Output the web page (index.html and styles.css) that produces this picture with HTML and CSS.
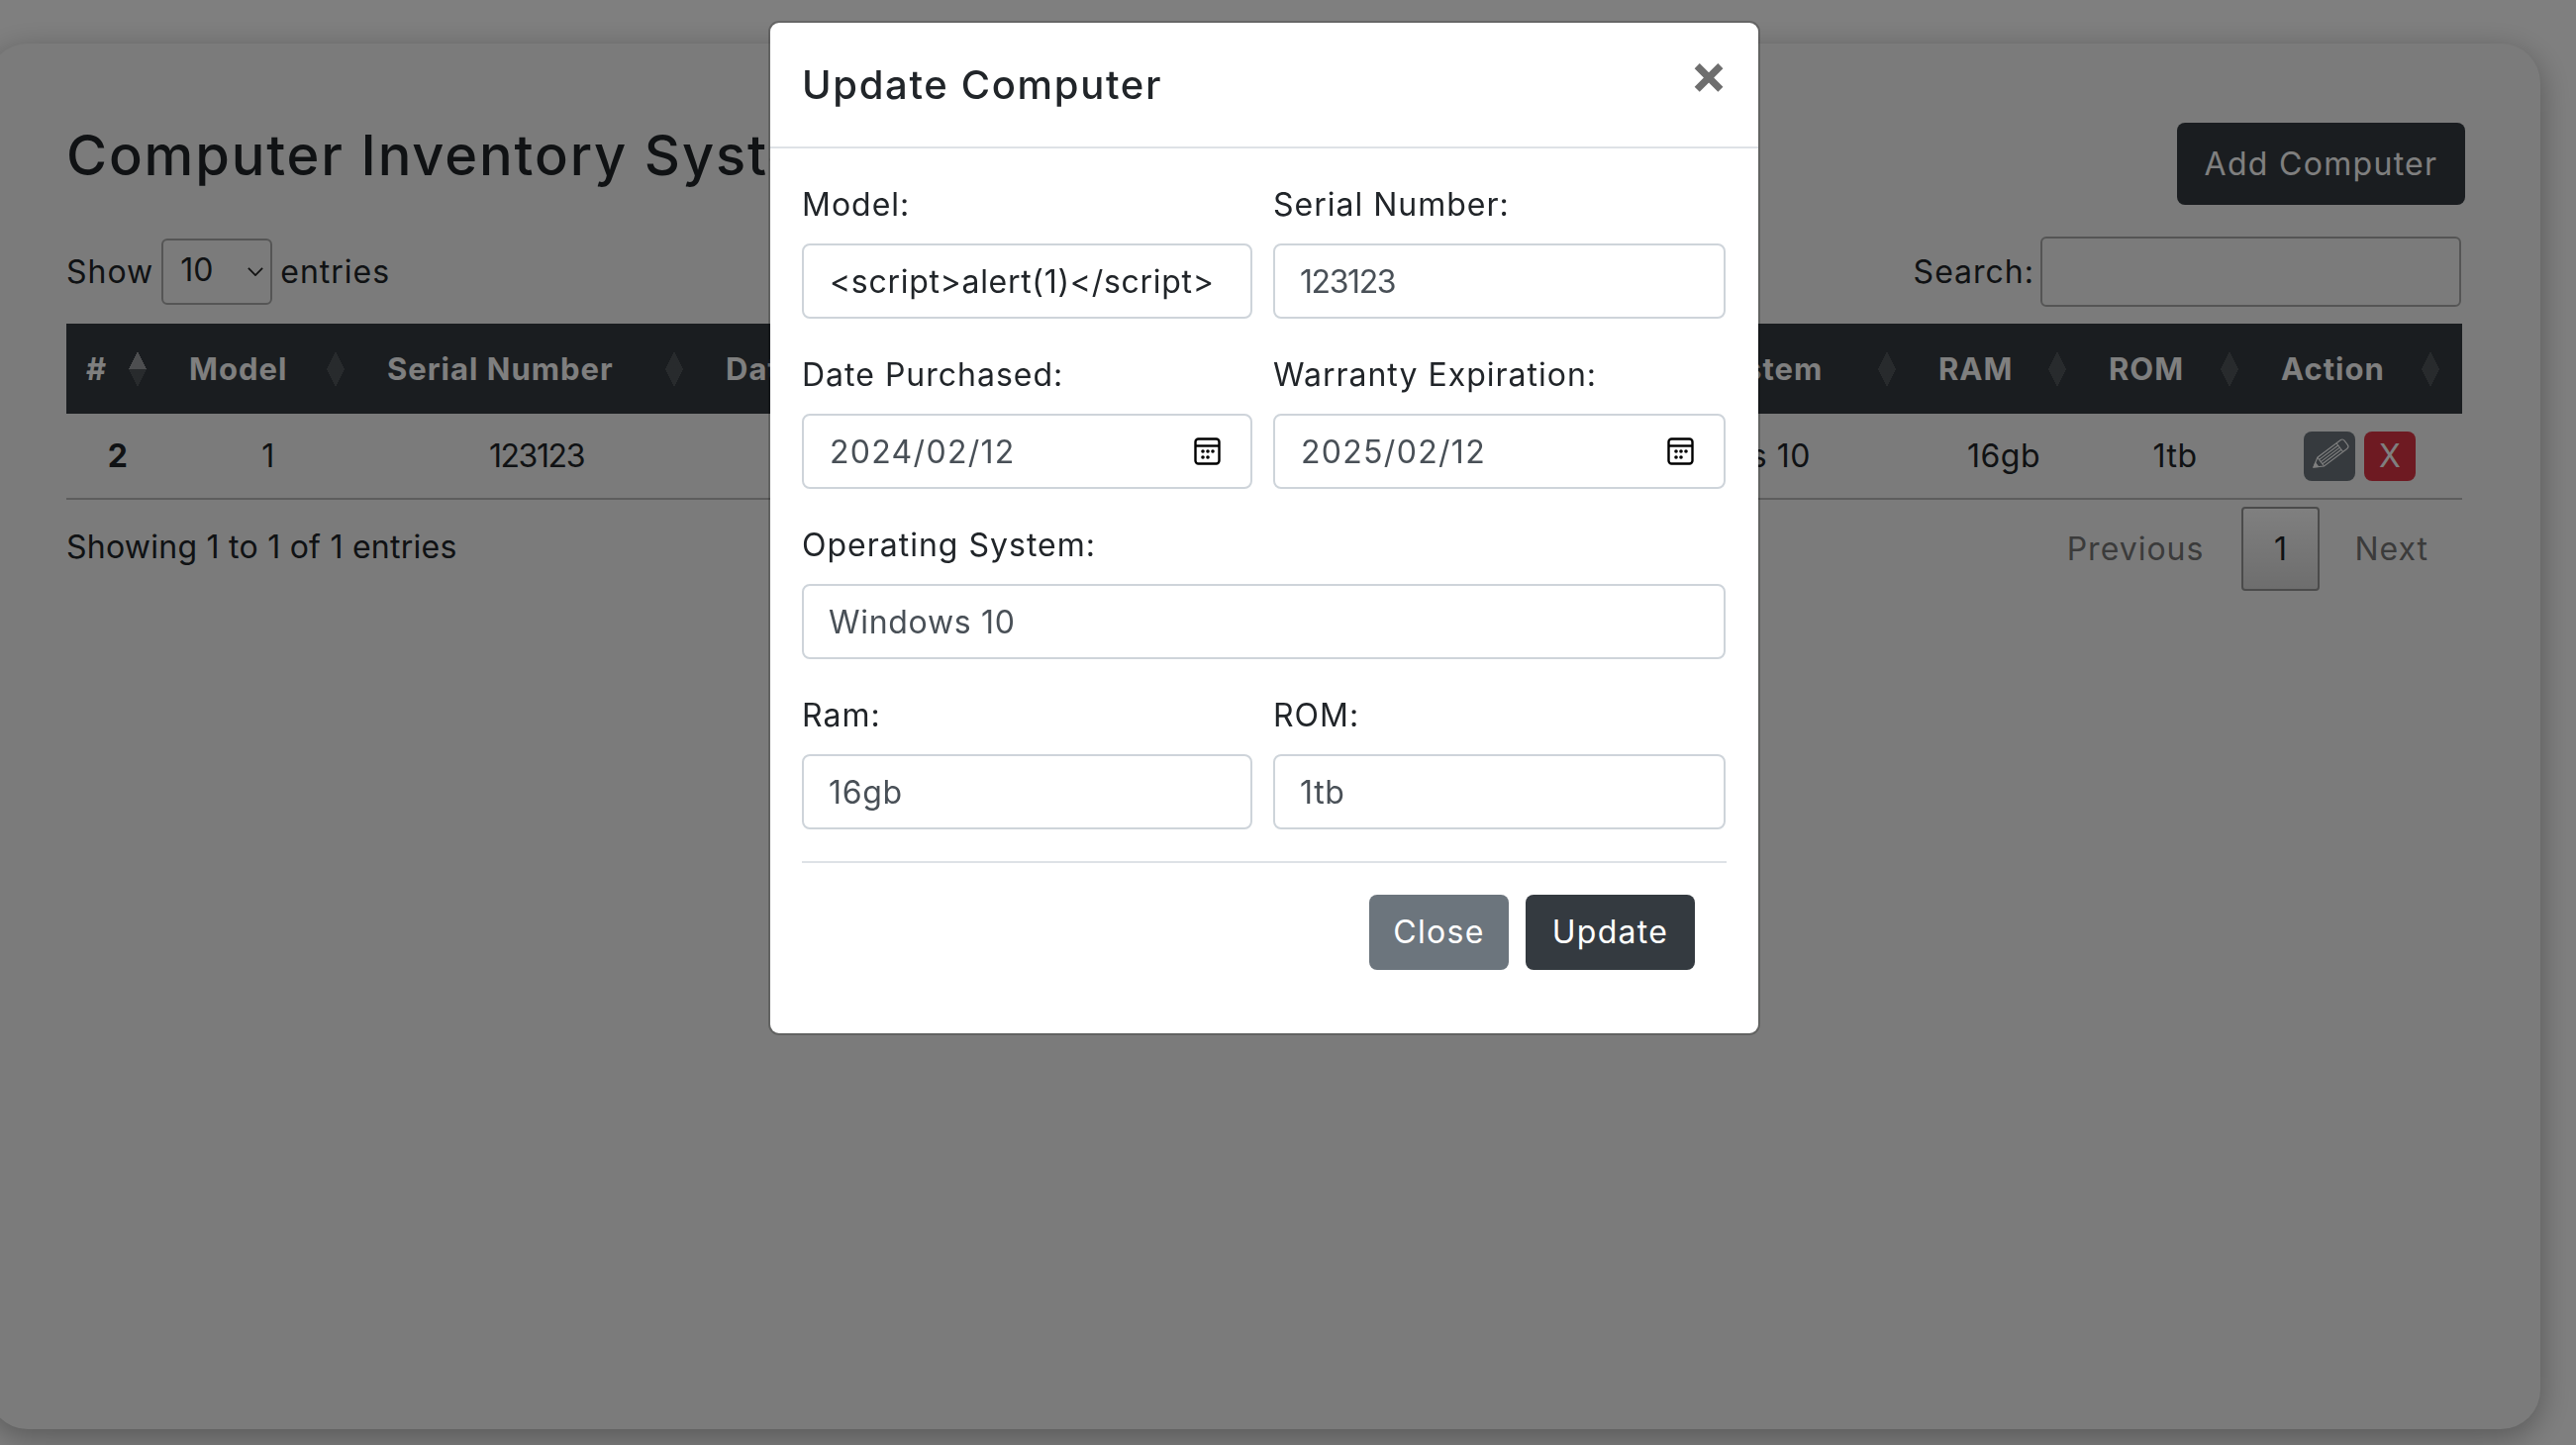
FILE: index.html
```html
<!DOCTYPE html>
<html lang="en">
  <head>
    <title>Computer Inventory System</title>
    <meta charset="utf-8">
    <link rel="stylesheet" href="styles.css">
  </head>
  <body>

  <div class="card">
    <div class="top">
      <h2 class="title">Computer Inventory System</h2>
      <button class="btn btn-add">Add Computer</button>
    </div>

    <div class="toolbar">
      <div class="length">
        Show
        <span class="select-wrap">
          <select class="select"><option>10</option><option>25</option></select>
          <svg class="chevron" viewBox="0 0 18 10"><path d="M1 1l8 8 8-8"/></svg>
        </span>
        entries
      </div>
      <label class="search">Search:<input class="search-input" type="text"></label>
    </div>

    <table class="list">
      <colgroup>
        <col class="c-id"><col class="c-model"><col class="c-serial"><col class="c-date"><col class="c-date"><col class="c-os"><col class="c-ram"><col class="c-rom"><col class="c-action">
      </colgroup>
      <thead>
        <tr>
          <th><div class="th-in"># <span class="sort asc"></span></div></th>
          <th><div class="th-in">Model <span class="sort"></span></div></th>
          <th><div class="th-in">Serial Number <span class="sort"></span></div></th>
          <th><div class="th-in">Date Purchased <span class="sort"></span></div></th>
          <th><div class="th-in">Warranty Expiration <span class="sort"></span></div></th>
          <th><div class="th-in">Operating System <span class="sort"></span></div></th>
          <th><div class="th-in">RAM <span class="sort"></span></div></th>
          <th><div class="th-in">ROM <span class="sort"></span></div></th>
          <th><div class="th-in">Action <span class="sort"></span></div></th>
        </tr>
      </thead>
      <tbody>
        <tr>
          <td class="bold">2</td>
          <td>1</td>
          <td class="num">123123</td>
          <td>2024-02-12</td>
          <td>2025-02-12</td>
          <td>Windows 10</td>
          <td>16gb</td>
          <td>1tb</td>
          <td>
            <div class="actions">
              <button class="btn-sm btn-edit">
                <svg class="pencil" viewBox="0 0 52 50">
                  <g transform="translate(10 36) rotate(-37)">
                    <path d="M0 0L9-5.5H38a3 3 0 0 1 3 3v5a3 3 0 0 1-3 3H9Z"/>
                    <path d="M9-5.5V5.5M33-5.5V5.5M9-2.7H33M9 0H33M9 2.7H33"/>
                    <path class="tip" d="M0 0L4-2.5V2.5Z"/>
                  </g>
                </svg>
              </button>
              <button class="btn-sm btn-del">X</button>
            </div>
          </td>
        </tr>
      </tbody>
    </table>

    <div class="foot">
      <div class="info">Showing 1 to 1 of 1 entries</div>
      <div class="paging">
        <span class="page-link">Previous</span>
        <span class="page-current">1</span>
        <span class="page-link">Next</span>
      </div>
    </div>
  </div>

  <div class="backdrop"></div>

  <div class="modal">
    <div class="modal-head">
      <h5 class="modal-title">Update Computer</h5>
      <span class="close">&times;</span>
    </div>
    <form class="modal-body">
      <div class="field">
        <label>Model:</label>
        <input class="input dark" type="text" value="&lt;script&gt;alert(1)&lt;/script&gt;">
      </div>
      <div class="field">
        <label>Serial Number:</label>
        <input class="input digits" type="text" value="123123">
      </div>
      <div class="field">
        <label>Date Purchased:</label>
        <div class="date-wrap">
          <input class="input date" type="text" value="2024/02/12">
          <svg class="cal" viewBox="0 0 27 28"><rect x="1.5" y="1.5" width="24" height="25" rx="3"/><path d="M1.5 8.5h24"/><g class="dots"><circle cx="9" cy="14" r="1.8"/><circle cx="14" cy="14" r="1.8"/><circle cx="19" cy="14" r="1.8"/><circle cx="9" cy="20" r="1.8"/><circle cx="14" cy="20" r="1.8"/></g></svg>
        </div>
      </div>
      <div class="field">
        <label>Warranty Expiration:</label>
        <div class="date-wrap">
          <input class="input date" type="text" value="2025/02/12">
          <svg class="cal" viewBox="0 0 27 28"><rect x="1.5" y="1.5" width="24" height="25" rx="3"/><path d="M1.5 8.5h24"/><g class="dots"><circle cx="9" cy="14" r="1.8"/><circle cx="14" cy="14" r="1.8"/><circle cx="19" cy="14" r="1.8"/><circle cx="9" cy="20" r="1.8"/><circle cx="14" cy="20" r="1.8"/></g></svg>
        </div>
      </div>
      <div class="field wide">
        <label>Operating System:</label>
        <input class="input" type="text" value="Windows 10">
      </div>
      <div class="field">
        <label>Ram:</label>
        <input class="input" type="text" value="16gb">
      </div>
      <div class="field">
        <label>ROM:</label>
        <input class="input" type="text" value="1tb">
      </div>
    </form>
    <div class="modal-foot">
      <button class="btn btn-close">Close</button>
      <button class="btn btn-update">Update</button>
    </div>
  </div>

  </body>
</html>
```

FILE: styles.css
```css
html {
  height: 100%;
}
body {
  margin: 0;
  height: 1460px;
  overflow: hidden;
  background: #fff;
  color: #212529;
  font-family: "Inter", "Liberation Sans", sans-serif;
  font-size: 32px;
  letter-spacing: 1px;
  line-height: 48px;
}

button, input, select {
  font-family: inherit;
}

.card {
  box-sizing: border-box;
  width: 2578px;
  height: 1400px;
  margin: 44px 0 0 -12px;
  padding: 80px 79px;
  background: #f6f7f6;
  border-radius: 40px;
  box-shadow: 0 8px 32px rgba(0,0,0,0.32);
}

.top {
  display: flex;
  justify-content: space-between;
  align-items: flex-start;
}
.title {
  margin: -2px 0 0;
  font-size: 56px;
  font-weight: 500;
  letter-spacing: 1.85px;
  line-height: 70px;
  white-space: nowrap;
}

.btn {
  border: 0;
  border-radius: 8px;
  color: #fff;
  font-size: 32px;
  letter-spacing: 1.3px;
  line-height: 48px;
  cursor: pointer;
}
.btn-add {
  width: 291px;
  height: 83px;
  margin-right: -3px;
  background: #343a40;
}

.toolbar {
  display: flex;
  justify-content: space-between;
  align-items: center;
  height: 71px;
  margin: 32px 0 17px;
}
.length {
  display: flex;
  align-items: center;
  gap: 8px;
}
.select-wrap {
  position: relative;
  display: block;
}
.select {
  display: block;
  box-sizing: border-box;
  width: 112px;
  height: 67px;
  padding: 0 0 4px 17px;
  appearance: none;
  background: transparent;
  border: 2px solid #aaa;
  border-radius: 6px;
  color: #212529;
  font-size: 32px;
}
.chevron {
  position: absolute;
  right: 9px;
  top: 29px;
  width: 16px;
  height: 9px;
  fill: none;
  stroke: #222;
  stroke-width: 2;
}
.search {
  display: flex;
  align-items: center;
  gap: 6px;
}
.search-input {
  box-sizing: border-box;
  width: 425px;
  height: 71px;
  margin-right: 1px;
  background: transparent;
  border: 2px solid #aaa;
  border-radius: 6px;
}

.list {
  width: 2420px;
  table-layout: fixed;
  border-collapse: collapse;
}
.c-id { width: 104px; }
.c-model { width: 200px; }
.c-serial { width: 342px; }
.c-date { width: 410px; }
.c-os { width: 405px; }
.c-ram { width: 172px; }
.c-rom { width: 174px; }
.c-action { width: 203px; }

.list th {
  height: 91px;
  padding: 0;
  background: #343a40;
  color: #fff;
  font-weight: 700;
  font-size: 31px;
  letter-spacing: 1px;
  text-align: left;
}
.th-in {
  display: flex;
  justify-content: space-between;
  align-items: center;
  padding: 0 23px 0 20px;
  white-space: nowrap;
}
.sort {
  display: block;
  width: 18px;
  height: 36px;
  background:
    linear-gradient(to bottom right, transparent 50%, rgba(255,255,255,0.14) 50%) 0 0 / 9px 18px no-repeat,
    linear-gradient(to bottom left, transparent 50%, rgba(255,255,255,0.14) 50%) 9px 0 / 9px 18px no-repeat,
    linear-gradient(to top right, transparent 50%, rgba(255,255,255,0.14) 50%) 0 18px / 9px 18px no-repeat,
    linear-gradient(to top left, transparent 50%, rgba(255,255,255,0.14) 50%) 9px 18px / 9px 18px no-repeat;
}
.sort.asc {
  background:
    linear-gradient(to bottom right, transparent 50%, rgba(255,255,255,0.5) 50%) 0 0 / 9px 18px no-repeat,
    linear-gradient(to bottom left, transparent 50%, rgba(255,255,255,0.5) 50%) 9px 0 / 9px 18px no-repeat,
    linear-gradient(to top right, transparent 50%, rgba(255,255,255,0.14) 50%) 0 18px / 9px 18px no-repeat,
    linear-gradient(to top left, transparent 50%, rgba(255,255,255,0.14) 50%) 9px 18px / 9px 18px no-repeat;
}

.list td {
  height: 85px;
  padding: 0;
  text-align: center;
  letter-spacing: 0.5px;
  border-bottom: 2px solid #bbb;
}
.list td.bold {
  font-weight: 700;
}
.list td.num {
  letter-spacing: -1.4px;
}
.actions {
  display: flex;
  justify-content: center;
  gap: 9px;
  padding-right: 4px;
}
.btn-sm {
  display: block;
  width: 52px;
  height: 50px;
  padding: 0;
  border: 0;
  border-radius: 8px;
  color: #fff;
  font-size: 32px;
  font-weight: 400;
}
.btn-edit {
  background: #6c757d;
}
.btn-del {
  background: #dc3545;
}
.pencil {
  display: block;
  width: 52px;
  height: 50px;
  fill: none;
  stroke: #fff;
  stroke-width: 1.1;
}
.pencil .tip {
  fill: #fff;
}

.foot {
  display: flex;
  justify-content: space-between;
  align-items: flex-start;
  margin-top: 7px;
}
.info {
  margin-top: 17px;
  letter-spacing: 0.25px;
}
.paging {
  display: flex;
  align-items: center;
  height: 85px;
  padding-right: 14px;
}
.page-link {
  padding: 0 20px;
  color: #777;
}
.page-current {
  box-sizing: border-box;
  width: 79px;
  height: 85px;
  margin: 0 15px 0 18px;
  border: 2px solid #979797;
  border-radius: 4px;
  background: linear-gradient(#fff, #dcdcdc);
  line-height: 81px;
  text-align: center;
}

.backdrop {
  position: fixed;
  left: 0;
  top: 0;
  width: 100%;
  height: 100%;
  background: rgba(0,0,0,0.5);
}

.modal {
  position: fixed;
  left: 778px;
  top: 23px;
  box-sizing: border-box;
  width: 998px;
  height: 1021px;
  background: #fff;
  border-radius: 9px;
  box-shadow: 0 0 0 2px rgba(0,0,0,0.2);
}
.modal-head {
  display: flex;
  justify-content: space-between;
  align-items: flex-start;
  box-sizing: border-box;
  height: 127px;
  padding: 33px 31px 0 32px;
  border-bottom: 2px solid #dee2e6;
}
.modal-title {
  margin: 0;
  font-size: 40px;
  font-weight: 500;
  letter-spacing: 1.66px;
  line-height: 60px;
}
.close {
  color: #6e6e6e;
  font-size: 56px;
  font-weight: 700;
  letter-spacing: 0;
  line-height: 40px;
  margin-top: -1px;
}
.modal-body {
  display: grid;
  grid-template-columns: 455px 457px;
  column-gap: 21px;
  row-gap: 36px;
  padding: 36px 0 0 32px;
}
.field label {
  display: block;
  height: 40px;
  margin-bottom: 20px;
  line-height: 42px;
}
.wide {
  grid-column: 1 / 3;
}
.input {
  display: block;
  box-sizing: border-box;
  width: 100%;
  height: 76px;
  padding: 0 25px;
  border: 2px solid #ced4da;
  border-radius: 8px;
  color: #495057;
  font-size: 32px;
  letter-spacing: 0.7px;
}
.input.dark {
  padding-left: 26px;
  color: #212529;
}
.input.digits {
  letter-spacing: -1.4px;
}
.input.date {
  padding-left: 26px;
  letter-spacing: 1.3px;
}
.date-wrap {
  position: relative;
}
.cal {
  position: absolute;
  right: 32px;
  top: 24px;
  width: 27px;
  height: 28px;
  fill: none;
  stroke: #000;
  stroke-width: 2.4;
}
.cal .dots {
  fill: #000;
  stroke: none;
}

.modal-foot {
  display: flex;
  justify-content: flex-end;
  gap: 17px;
  margin: 32px 32px 0;
  padding: 32px 32px 0 0;
  border-top: 2px solid #dee2e6;
}
.btn-close {
  width: 141px;
  height: 76px;
  background: #6c757d;
}
.btn-update {
  width: 171px;
  height: 76px;
  background: #343a40;
}
```
